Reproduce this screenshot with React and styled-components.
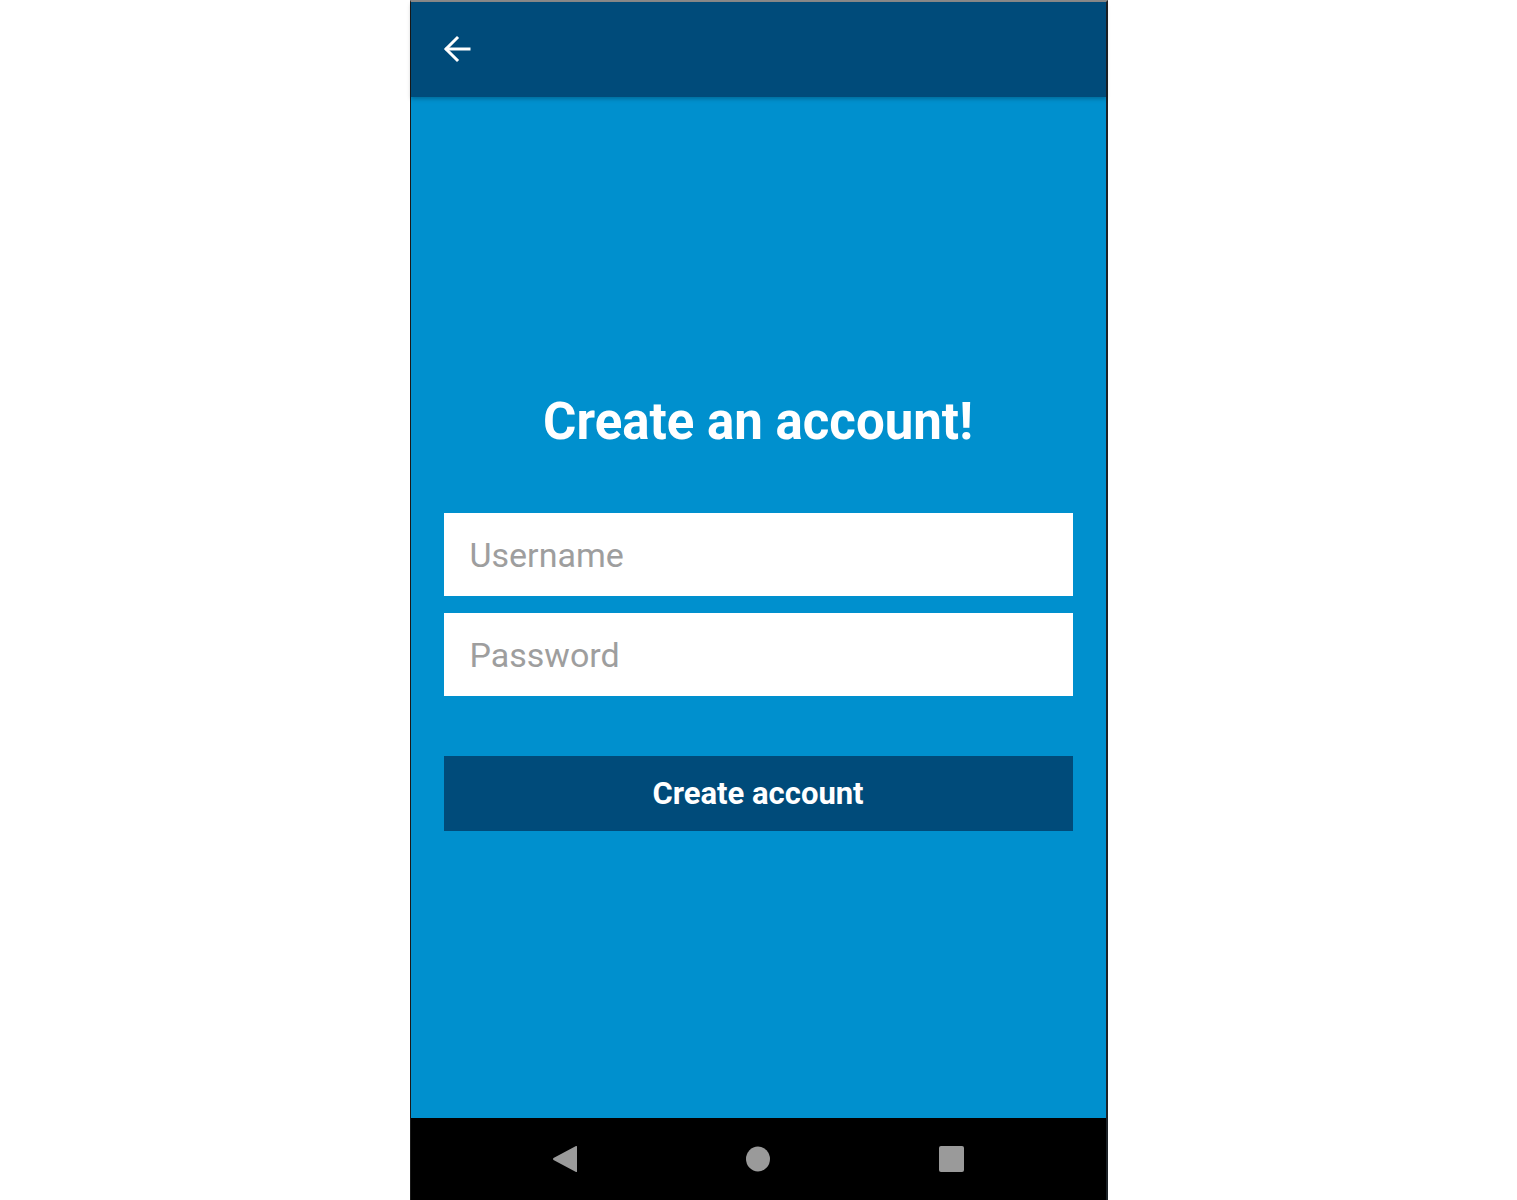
import styled, { createGlobalStyle } from 'styled-components';

const GlobalStyle = createGlobalStyle`
  html, body {
    margin: 0;
    padding: 0;
    background: #ffffff;
    font-family: Roboto, "Liberation Sans", sans-serif;
  }
`;

const Page = styled.div`
  display: flex;
  justify-content: center;
  height: 1200px;
  overflow: hidden;
`;

const Phone = styled.div`
  display: flex;
  flex-direction: column;
  width: 698px;
  height: 1200px;
  box-sizing: border-box;
  border-left: 1px solid #1a1a1a;
  border-right: 2px solid #1c2227;
  border-top: 2px solid #8a8a8a;
  background: #0090ce;
`;

const Header = styled.header`
  display: flex;
  align-items: center;
  height: 95px;
  flex-shrink: 0;
  padding-left: 31px;
  background: #004b7a;
  box-shadow: 0 2px 4px rgba(0, 0, 0, 0.25);
  position: relative;
  z-index: 1;
`;

const BackButton = styled.button`
  display: flex;
  padding: 0;
  margin-top: -2px;
  border: 0;
  background: none;
  cursor: pointer;
`;

const Content = styled.main`
  flex: 1;
  display: flex;
  flex-direction: column;
  padding: 0 33px;
`;

const Title = styled.h1`
  margin: 297px 0 0;
  height: 56px;
  line-height: 56px;
  text-align: center;
  color: #ffffff;
  font-size: 51px;
  font-weight: 700;
`;

const Form = styled.form`
  display: flex;
  flex-direction: column;
  gap: 17px;
  margin-top: 63px;
`;

const Input = styled.input`
  height: 83px;
  box-sizing: border-box;
  padding: 0 26px;
  border: 0;
  outline: none;
  background: #ffffff;
  font-family: Roboto, "Liberation Sans", sans-serif;
  font-size: 34px;
  color: #333;

  &::placeholder {
    color: #9e9e9e;
  }
`;

const SubmitButton = styled.button`
  height: 75px;
  margin-top: 43px;
  border: 0;
  background: #004b7a;
  color: #ffffff;
  font-family: Roboto, "Liberation Sans", sans-serif;
  font-size: 31px;
  font-weight: 700;
  cursor: pointer;
`;

const NavBar = styled.nav`
  display: flex;
  align-items: center;
  justify-content: center;
  gap: 165px;
  height: 82px;
  flex-shrink: 0;
  background: #000000;
`;

const NavIcon = styled.svg`
  width: 28px;
  height: 28px;
  fill: #9a9a9a;
`;

export default function App() {
  return (
    <>
      <GlobalStyle />
      <Page>
        <Phone>
          <Header>
            <BackButton type="button" aria-label="Back">
              <svg width="30" height="30" viewBox="0 0 30 30" fill="none" stroke="#fff" strokeWidth="3" strokeLinecap="square">
                <path d="M27 15H5" />
                <path d="M15 4L4 15l11 11" />
              </svg>
            </BackButton>
          </Header>
          <Content>
            <Title>Create an account!</Title>
            <Form onSubmit={(e) => e.preventDefault()}>
              <Input type="text" placeholder="Username" />
              <Input type="password" placeholder="Password" />
              <SubmitButton type="submit">Create account</SubmitButton>
            </Form>
          </Content>
          <NavBar>
            <NavIcon viewBox="0 0 28 28">
              <path d="M26 1.5v25c0 .6-.5.8-1 .4L2.5 15a1.3 1.3 0 0 1 0-2L25 1.1c.5-.4 1-.2 1 .4z" />
            </NavIcon>
            <NavIcon viewBox="0 0 28 28">
              <ellipse cx="14" cy="14" rx="12" ry="12.5" />
            </NavIcon>
            <NavIcon viewBox="0 0 28 28">
              <rect x="2" y="1" width="25" height="26" rx="2" />
            </NavIcon>
          </NavBar>
        </Phone>
      </Page>
    </>
  );
}
